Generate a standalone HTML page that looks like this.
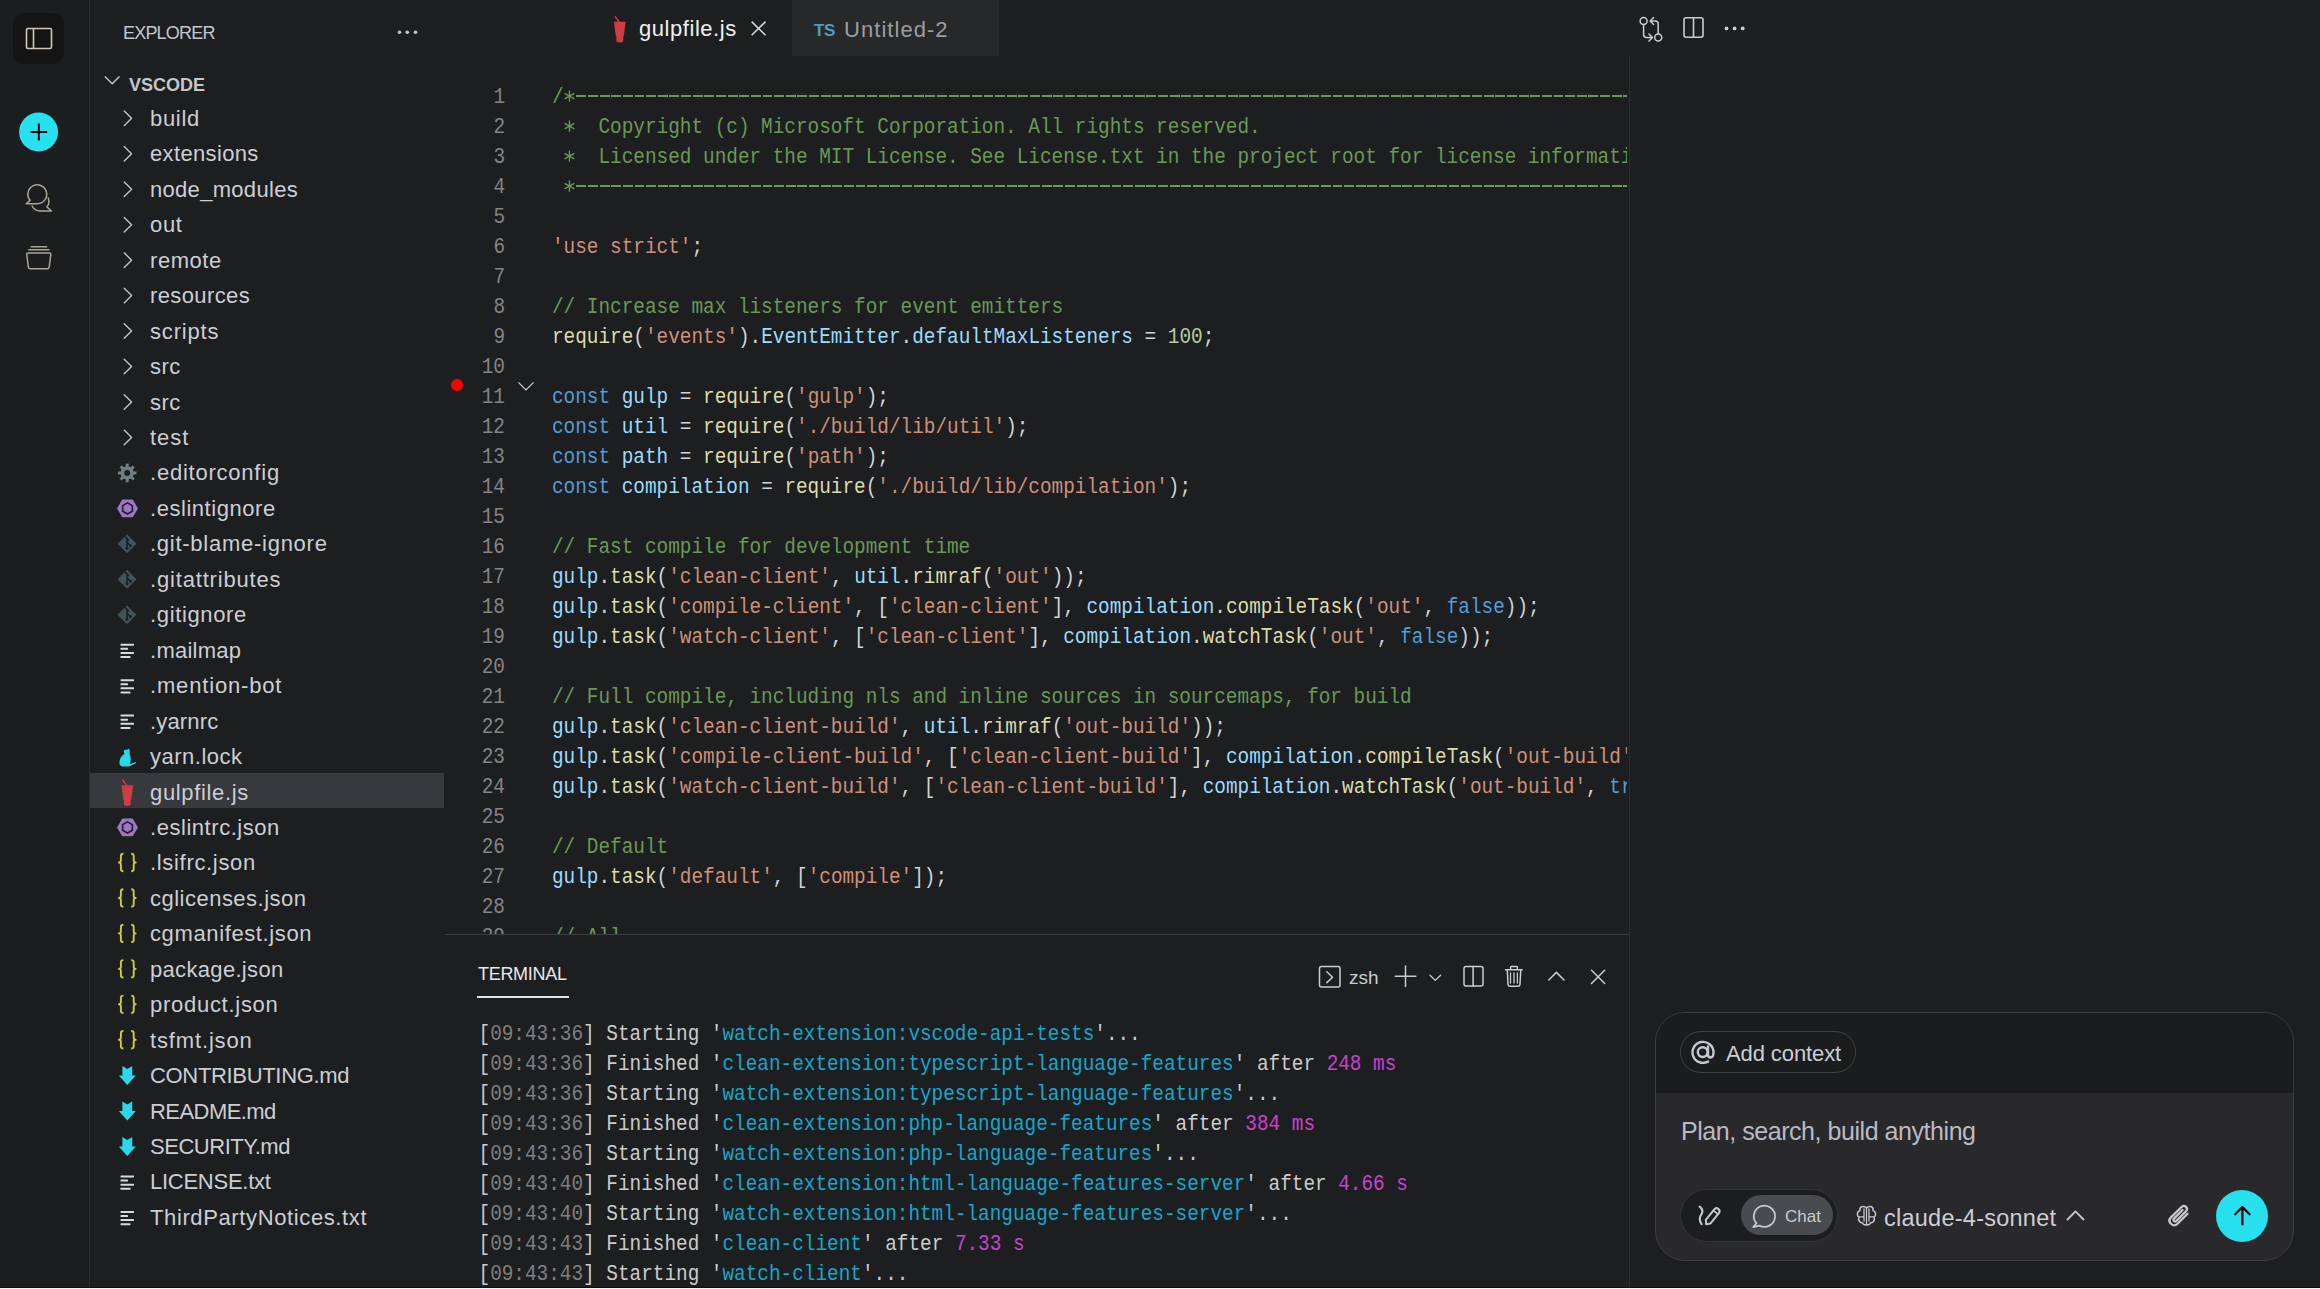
<!DOCTYPE html><html><head><meta charset="utf-8"><style>
*{margin:0;padding:0;box-sizing:border-box}
html,body{width:2320px;height:1289px;overflow:hidden;background:#1d1e20;font-family:"Liberation Sans",sans-serif}
.a{position:absolute}
#act{left:0;top:0;width:89px;height:1288px;background:#1c1d1f}
#actb{left:89px;top:0;width:1px;height:1288px;background:#2a2b2d}
#side{left:90px;top:0;width:355px;height:1288px;background:#1d1e20}
.row{position:absolute;left:0;width:354px;height:35.45px;}
.row .t{position:absolute;left:60px;top:1.5px;line-height:35.45px;font-size:22px;letter-spacing:0.25px;color:#ccced3;white-space:nowrap}
.row.sel{background:#37393d}
.code{position:absolute;left:445px;top:56px;width:1182px;height:878px;overflow:hidden}
.ln{position:absolute;left:0;width:60px;transform:scaleY(1.1);transform-origin:0 20.15px;text-align:right;font-family:"Liberation Mono",monospace;font-size:19.38px;line-height:30px;color:#858585;white-space:pre}
.cl{position:absolute;left:107px;transform:scaleY(1.1);transform-origin:0 20.15px;font-family:"Liberation Mono",monospace;font-size:19.38px;line-height:30px;color:#d4d4d4;white-space:pre}
.c{color:#6a9955}.s{color:#ce9178}.k{color:#569cd6}.v{color:#9cdcfe}.f{color:#dcdcaa}.n{color:#b5cea8}
.tl{position:absolute;left:478.5px;transform:scaleY(1.1);transform-origin:0 20.15px;font-family:"Liberation Mono",monospace;font-size:19.38px;line-height:30px;color:#cccccc;white-space:pre}
.g{color:#7f7f7f}.y{color:#11a8cd}.m{color:#c843cf}
</style></head><body><div class="a" id="act"></div><div class="a" id="actb"></div>
<div class="a" style="left:13px;top:13px;width:51px;height:51px;border-radius:12px;background:#141414"></div>
<svg class="a" style="left:0;top:0" width="89" height="300" viewBox="0 0 89 300"><rect x="26.5" y="28.5" width="25" height="20" rx="1.5" fill="none" stroke="#cfc8b8" stroke-width="1.6"/><line x1="33.5" y1="28.5" x2="33.5" y2="48.5" stroke="#cfc8b8" stroke-width="1.6"/><circle cx="38.6" cy="132" r="19.5" fill="#27e1ef"/><path d="M30.6 132H47.1M38.8 123.6V140.4" stroke="#000" stroke-width="2"/></svg>
<svg class="a" style="left:0px;top:170px" width="89" height="110" viewBox="0 170 89 110"><path d="M30.1 200.34 A9.4 9.4 0 1 1 37.3 203.7 H26.2 Z" fill="none" stroke="#aba597" stroke-width="1.5" stroke-linecap="round" stroke-linejoin="round"/><path d="M32.1 206 A9.3 9.3 0 0 0 40 211 H51.5 L46.9 206.9 A9.6 9.6 0 0 0 48.3 197.9" fill="none" stroke="#aba597" stroke-width="1.5" stroke-linecap="round" stroke-linejoin="round"/><path d="M31.2 246.8H46.6M28.8 249.8H48.9" fill="none" stroke="#aba597" stroke-width="1.5" stroke-linecap="round" stroke-linejoin="round"/><path d="M28.2 252.9H49.4Q51 252.9 50.8 254.5L49.2 267.2Q49 268.8 47.4 268.8H30.2Q28.6 268.8 28.4 267.2L26.8 254.5Q26.6 252.9 28.2 252.9Z" fill="none" stroke="#aba597" stroke-width="1.5" stroke-linecap="round" stroke-linejoin="round"/></svg>
<div class="a" id="side">
<div class="a" style="left:33px;top:19px;font-size:18px;color:#c4c6cb;letter-spacing:-0.8px;line-height:28px">EXPLORER</div>
<svg class="a" style="left:300px;top:22px" width="30" height="20"><circle cx="9.5" cy="10.3" r="1.8" fill="#c4c6cb"/><circle cx="17.3" cy="10.3" r="1.8" fill="#c4c6cb"/><circle cx="25.5" cy="10.3" r="1.8" fill="#c4c6cb"/></svg>
<div class="a" style="left:39px;top:69px;font-size:18px;font-weight:bold;color:#c4c6cb;line-height:32px">VSCODE</div>
<svg class="a" style="left:14px;top:74px" width="18" height="14"><path d="M0.9 2.6L8.2 9.8L15.5 2.6" fill="none" stroke="#c4c6cb" stroke-width="1.4"/></svg>
<div class="row" style="top:99.45px"><span class="t" style="letter-spacing:0.675px">build</span></div>
<div class="row" style="top:134.90px"><span class="t" style="letter-spacing:0.350px">extensions</span></div>
<div class="row" style="top:170.35px"><span class="t" style="letter-spacing:0.305px">node_modules</span></div>
<div class="row" style="top:205.80px"><span class="t" style="letter-spacing:0.700px">out</span></div>
<div class="row" style="top:241.25px"><span class="t" style="letter-spacing:0.550px">remote</span></div>
<div class="row" style="top:276.70px"><span class="t" style="letter-spacing:0.387px">resources</span></div>
<div class="row" style="top:312.15px"><span class="t" style="letter-spacing:0.833px">scripts</span></div>
<div class="row" style="top:347.60px"><span class="t" style="letter-spacing:0.500px">src</span></div>
<div class="row" style="top:383.05px"><span class="t" style="letter-spacing:0.500px">src</span></div>
<div class="row" style="top:418.50px"><span class="t" style="letter-spacing:0.983px">test</span></div>
<div class="row" style="top:453.95px"><span class="t" style="letter-spacing:0.775px">.editorconfig</span></div>
<div class="row" style="top:489.40px"><span class="t" style="letter-spacing:0.542px">.eslintignore</span></div>
<div class="row" style="top:524.85px"><span class="t" style="letter-spacing:0.738px">.git-blame-ignore</span></div>
<div class="row" style="top:560.30px"><span class="t" style="letter-spacing:0.827px">.gitattributes</span></div>
<div class="row" style="top:595.75px"><span class="t" style="letter-spacing:0.639px">.gitignore</span></div>
<div class="row" style="top:631.20px"><span class="t" style="letter-spacing:0.264px">.mailmap</span></div>
<div class="row" style="top:666.65px"><span class="t" style="letter-spacing:0.832px">.mention-bot</span></div>
<div class="row" style="top:702.10px"><span class="t" style="letter-spacing:0.167px">.yarnrc</span></div>
<div class="row" style="top:737.55px"><span class="t" style="letter-spacing:0.500px">yarn.lock</span></div>
<div class="row sel" style="top:773.00px"><span class="t" style="letter-spacing:0.650px">gulpfile.js</span></div>
<div class="row" style="top:808.45px"><span class="t" style="letter-spacing:0.542px">.eslintrc.json</span></div>
<div class="row" style="top:843.90px"><span class="t" style="letter-spacing:0.677px">.lsifrc.json</span></div>
<div class="row" style="top:879.35px"><span class="t" style="letter-spacing:0.486px">cglicenses.json</span></div>
<div class="row" style="top:914.80px"><span class="t" style="letter-spacing:0.621px">cgmanifest.json</span></div>
<div class="row" style="top:950.25px"><span class="t" style="letter-spacing:0.323px">package.json</span></div>
<div class="row" style="top:985.70px"><span class="t" style="letter-spacing:0.723px">product.json</span></div>
<div class="row" style="top:1021.15px"><span class="t" style="letter-spacing:0.850px">tsfmt.json</span></div>
<div class="row" style="top:1056.60px"><span class="t" style="letter-spacing:-0.329px">CONTRIBUTING.md</span></div>
<div class="row" style="top:1092.05px"><span class="t" style="letter-spacing:-0.562px">README.md</span></div>
<div class="row" style="top:1127.50px"><span class="t" style="letter-spacing:-0.470px">SECURITY.md</span></div>
<div class="row" style="top:1162.95px"><span class="t" style="letter-spacing:-0.260px">LICENSE.txt</span></div>
<div class="row" style="top:1198.40px"><span class="t" style="letter-spacing:0.620px">ThirdPartyNotices.txt</span></div>
</div>
<div class="a" style="left:792px;top:0;width:207px;height:56px;background:#27282a"></div>
<div class="a" style="left:639px;top:13px;font-size:22px;letter-spacing:0.55px;color:#f0f0f0;line-height:32px">gulpfile.js</div>
<svg class="a" style="left:750px;top:20px" width="17" height="17"><path d="M1.6 1.6L15.6 15.3M15.6 1.6L1.6 15.3" stroke="#d8d8d8" stroke-width="1.5"/></svg>
<div class="a" style="left:814px;top:20.5px;font-size:17px;font-weight:bold;letter-spacing:-0.5px;color:#519aba;line-height:20px">TS</div>
<div class="a" style="left:844px;top:14px;font-size:22px;letter-spacing:1.05px;color:#9d9d9d;line-height:32px">Untitled-2</div>
<div class="a" style="left:1629px;top:56px;width:1px;height:1232px;background:#2c2d30"></div>
<div class="code">
<div class="ln" style="top:27.2px">1</div>
<div class="cl" style="top:27.2px"><span class="c">/</span></div>
<div class="ln" style="top:57.2px">2</div>
<div class="cl" style="top:57.2px"><span class="c">    Copyright (c) Microsoft Corporation. All rights reserved.</span></div>
<div class="ln" style="top:87.2px">3</div>
<div class="cl" style="top:87.2px"><span class="c">    Licensed under the MIT License. See License.txt in the project root for license information.</span></div>
<div class="ln" style="top:117.2px">4</div>
<div class="cl" style="top:117.2px"></div>
<div class="ln" style="top:147.2px">5</div>
<div class="cl" style="top:147.2px"></div>
<div class="ln" style="top:177.2px">6</div>
<div class="cl" style="top:177.2px"><span class="s">&#x27;use strict&#x27;</span>;</div>
<div class="ln" style="top:207.2px">7</div>
<div class="cl" style="top:207.2px"></div>
<div class="ln" style="top:237.2px">8</div>
<div class="cl" style="top:237.2px"><span class="c">// Increase max listeners for event emitters</span></div>
<div class="ln" style="top:267.2px">9</div>
<div class="cl" style="top:267.2px"><span class="f">require</span>(<span class="s">&#x27;events&#x27;</span>).<span class="v">EventEmitter</span>.<span class="v">defaultMaxListeners</span> = <span class="n">100</span>;</div>
<div class="ln" style="top:297.2px">10</div>
<div class="cl" style="top:297.2px"></div>
<div class="ln" style="top:327.2px">11</div>
<div class="cl" style="top:327.2px"><span class="k">const</span> <span class="v">gulp</span> = <span class="f">require</span>(<span class="s">&#x27;gulp&#x27;</span>);</div>
<div class="ln" style="top:357.2px">12</div>
<div class="cl" style="top:357.2px"><span class="k">const</span> <span class="v">util</span> = <span class="f">require</span>(<span class="s">&#x27;./build/lib/util&#x27;</span>);</div>
<div class="ln" style="top:387.2px">13</div>
<div class="cl" style="top:387.2px"><span class="k">const</span> <span class="v">path</span> = <span class="f">require</span>(<span class="s">&#x27;path&#x27;</span>);</div>
<div class="ln" style="top:417.2px">14</div>
<div class="cl" style="top:417.2px"><span class="k">const</span> <span class="v">compilation</span> = <span class="f">require</span>(<span class="s">&#x27;./build/lib/compilation&#x27;</span>);</div>
<div class="ln" style="top:447.2px">15</div>
<div class="cl" style="top:447.2px"></div>
<div class="ln" style="top:477.2px">16</div>
<div class="cl" style="top:477.2px"><span class="c">// Fast compile for development time</span></div>
<div class="ln" style="top:507.2px">17</div>
<div class="cl" style="top:507.2px"><span class="v">gulp</span>.<span class="f">task</span>(<span class="s">&#x27;clean-client&#x27;</span>, <span class="v">util</span>.<span class="f">rimraf</span>(<span class="s">&#x27;out&#x27;</span>));</div>
<div class="ln" style="top:537.2px">18</div>
<div class="cl" style="top:537.2px"><span class="v">gulp</span>.<span class="f">task</span>(<span class="s">&#x27;compile-client&#x27;</span>, [<span class="s">&#x27;clean-client&#x27;</span>], <span class="v">compilation</span>.<span class="f">compileTask</span>(<span class="s">&#x27;out&#x27;</span>, <span class="k">false</span>));</div>
<div class="ln" style="top:567.2px">19</div>
<div class="cl" style="top:567.2px"><span class="v">gulp</span>.<span class="f">task</span>(<span class="s">&#x27;watch-client&#x27;</span>, [<span class="s">&#x27;clean-client&#x27;</span>], <span class="v">compilation</span>.<span class="f">watchTask</span>(<span class="s">&#x27;out&#x27;</span>, <span class="k">false</span>));</div>
<div class="ln" style="top:597.2px">20</div>
<div class="cl" style="top:597.2px"></div>
<div class="ln" style="top:627.2px">21</div>
<div class="cl" style="top:627.2px"><span class="c">// Full compile, including nls and inline sources in sourcemaps, for build</span></div>
<div class="ln" style="top:657.2px">22</div>
<div class="cl" style="top:657.2px"><span class="v">gulp</span>.<span class="f">task</span>(<span class="s">&#x27;clean-client-build&#x27;</span>, <span class="v">util</span>.<span class="f">rimraf</span>(<span class="s">&#x27;out-build&#x27;</span>));</div>
<div class="ln" style="top:687.2px">23</div>
<div class="cl" style="top:687.2px"><span class="v">gulp</span>.<span class="f">task</span>(<span class="s">&#x27;compile-client-build&#x27;</span>, [<span class="s">&#x27;clean-client-build&#x27;</span>], <span class="v">compilation</span>.<span class="f">compileTask</span>(<span class="s">&#x27;out-build&#x27;</span>, <span class="k">true</span>));</div>
<div class="ln" style="top:717.2px">24</div>
<div class="cl" style="top:717.2px"><span class="v">gulp</span>.<span class="f">task</span>(<span class="s">&#x27;watch-client-build&#x27;</span>, [<span class="s">&#x27;clean-client-build&#x27;</span>], <span class="v">compilation</span>.<span class="f">watchTask</span>(<span class="s">&#x27;out-build&#x27;</span>, <span class="k">true</span>));</div>
<div class="ln" style="top:747.2px">25</div>
<div class="cl" style="top:747.2px"></div>
<div class="ln" style="top:777.2px">26</div>
<div class="cl" style="top:777.2px"><span class="c">// Default</span></div>
<div class="ln" style="top:807.2px">27</div>
<div class="cl" style="top:807.2px"><span class="v">gulp</span>.<span class="f">task</span>(<span class="s">&#x27;default&#x27;</span>, [<span class="s">&#x27;compile&#x27;</span>]);</div>
<div class="ln" style="top:837.2px">28</div>
<div class="cl" style="top:837.2px"></div>
<div class="ln" style="top:867.2px">29</div>
<div class="cl" style="top:867.2px"><span class="c">// All</span></div>
</div>
<div class="a" style="left:575.27px;top:95.0px;width:1051.73px;height:2px;background:repeating-linear-gradient(90deg,transparent 0 1.4px,#6a9955 1.4px 11.3px,transparent 11.3px 11.633px)"></div>
<div class="a" style="left:575.27px;top:185.0px;width:1051.73px;height:2px;background:repeating-linear-gradient(90deg,transparent 0 1.4px,#6a9955 1.4px 11.3px,transparent 11.3px 11.633px)"></div>
<svg class="a" style="left:555px;top:75px" width="30" height="130" viewBox="555 75 30 130"><path d="M569.45 90.50L569.45 101.70" stroke="#6a9955" stroke-width="1.35"/><path d="M564.60 93.30L574.30 98.90" stroke="#6a9955" stroke-width="1.35"/><path d="M574.30 93.30L564.60 98.90" stroke="#6a9955" stroke-width="1.35"/><path d="M569.45 120.50L569.45 131.70" stroke="#6a9955" stroke-width="1.35"/><path d="M564.60 123.30L574.30 128.90" stroke="#6a9955" stroke-width="1.35"/><path d="M574.30 123.30L564.60 128.90" stroke="#6a9955" stroke-width="1.35"/><path d="M569.45 150.50L569.45 161.70" stroke="#6a9955" stroke-width="1.35"/><path d="M564.60 153.30L574.30 158.90" stroke="#6a9955" stroke-width="1.35"/><path d="M574.30 153.30L564.60 158.90" stroke="#6a9955" stroke-width="1.35"/><path d="M569.45 180.50L569.45 191.70" stroke="#6a9955" stroke-width="1.35"/><path d="M564.60 183.30L574.30 188.90" stroke="#6a9955" stroke-width="1.35"/><path d="M574.30 183.30L564.60 188.90" stroke="#6a9955" stroke-width="1.35"/></svg>
<div class="a" style="left:450.9px;top:378.8px;width:11.8px;height:11.8px;border-radius:50%;background:#ff0000"></div>
<svg class="a" style="left:516px;top:380.5px" width="20" height="12"><path d="M2.4 1.4L10 8.9L17.6 1.4" fill="none" stroke="#cccccc" stroke-width="1.3"/></svg>
<div class="a" style="left:445px;top:934px;width:1184px;height:1px;background:#3c3d40"></div>
<div class="a" style="left:478px;top:961px;font-size:18px;letter-spacing:-0.3px;color:#e8e8e8;line-height:26px">TERMINAL</div>
<div class="a" style="left:477px;top:996px;width:92px;height:2px;background:#e0e0e0"></div>
<div class="tl" style="top:1020px">[<span class="g">09:43:36</span>] Starting '<span class="y">watch-extension:vscode-api-tests</span>'...</div>
<div class="tl" style="top:1050px">[<span class="g">09:43:36</span>] Finished '<span class="y">clean-extension:typescript-language-features</span>' after <span class="m">248 ms</span></div>
<div class="tl" style="top:1080px">[<span class="g">09:43:36</span>] Starting '<span class="y">watch-extension:typescript-language-features</span>'...</div>
<div class="tl" style="top:1110px">[<span class="g">09:43:36</span>] Finished '<span class="y">clean-extension:php-language-features</span>' after <span class="m">384 ms</span></div>
<div class="tl" style="top:1140px">[<span class="g">09:43:36</span>] Starting '<span class="y">watch-extension:php-language-features</span>'...</div>
<div class="tl" style="top:1170px">[<span class="g">09:43:40</span>] Finished '<span class="y">clean-extension:html-language-features-server</span>' after <span class="m">4.66 s</span></div>
<div class="tl" style="top:1200px">[<span class="g">09:43:40</span>] Starting '<span class="y">watch-extension:html-language-features-server</span>'...</div>
<div class="tl" style="top:1230px">[<span class="g">09:43:43</span>] Finished '<span class="y">clean-client</span>' after <span class="m">7.33 s</span></div>
<div class="tl" style="top:1260px">[<span class="g">09:43:43</span>] Starting '<span class="y">watch-client</span>'...</div>
<div class="a" style="left:1655px;top:1012px;width:639px;height:249px;border-radius:30px;border:1.5px solid #3c3d40;background:#29292c;overflow:hidden"><div class="a" style="left:0;top:0;width:100%;height:80px;background:#1b1c1e"></div></div>
<div class="a" style="left:1680px;top:1031px;width:176px;height:42px;border-radius:21px;border:1.8px solid #404144"></div>
<div class="a" style="left:1726px;top:1038.5px;font-size:22px;letter-spacing:-0.1px;color:#ccced3;line-height:30px">Add context</div>
<div class="a" style="left:1681px;top:1115px;font-size:25px;letter-spacing:-0.45px;color:#b9bbc1;line-height:32px">Plan, search, build anything</div>
<div class="a" style="left:1680px;top:1189px;width:158px;height:53px;border-radius:27px;border:1.5px solid #333437;background:#1c1d1f"></div>
<div class="a" style="left:1741px;top:1195px;width:92px;height:40px;border-radius:20px;background:#4a4b4e"></div>
<div class="a" style="left:1785px;top:1204.5px;font-size:17px;color:#c8cacf;line-height:24px">Chat</div>
<div class="a" style="left:1884px;top:1202px;font-size:23.5px;letter-spacing:0.25px;color:#ccced3;line-height:32px">claude-4-sonnet</div>
<div class="a" style="left:2216px;top:1190px;width:52px;height:52px;border-radius:50%;background:#27e1ef"></div>
<svg class="a" style="left:90px;top:60px" width="355" height="1200" viewBox="90 60 355 1200"><path d="M124.2 111.05L131.6 118.35L124.2 125.65" fill="none" stroke="#c4c6cb" stroke-width="1.35" stroke-linecap="round" stroke-linejoin="round"/><path d="M124.2 146.50L131.6 153.80L124.2 161.10" fill="none" stroke="#c4c6cb" stroke-width="1.35" stroke-linecap="round" stroke-linejoin="round"/><path d="M124.2 181.95L131.6 189.25L124.2 196.55" fill="none" stroke="#c4c6cb" stroke-width="1.35" stroke-linecap="round" stroke-linejoin="round"/><path d="M124.2 217.40L131.6 224.70L124.2 232.00" fill="none" stroke="#c4c6cb" stroke-width="1.35" stroke-linecap="round" stroke-linejoin="round"/><path d="M124.2 252.85L131.6 260.15L124.2 267.45" fill="none" stroke="#c4c6cb" stroke-width="1.35" stroke-linecap="round" stroke-linejoin="round"/><path d="M124.2 288.30L131.6 295.60L124.2 302.90" fill="none" stroke="#c4c6cb" stroke-width="1.35" stroke-linecap="round" stroke-linejoin="round"/><path d="M124.2 323.75L131.6 331.05L124.2 338.35" fill="none" stroke="#c4c6cb" stroke-width="1.35" stroke-linecap="round" stroke-linejoin="round"/><path d="M124.2 359.20L131.6 366.50L124.2 373.80" fill="none" stroke="#c4c6cb" stroke-width="1.35" stroke-linecap="round" stroke-linejoin="round"/><path d="M124.2 394.65L131.6 401.95L124.2 409.25" fill="none" stroke="#c4c6cb" stroke-width="1.35" stroke-linecap="round" stroke-linejoin="round"/><path d="M124.2 430.10L131.6 437.40L124.2 444.70" fill="none" stroke="#c4c6cb" stroke-width="1.35" stroke-linecap="round" stroke-linejoin="round"/><circle cx="127.2" cy="472.95" r="6.6" fill="#6d8086"/><rect x="125.7" y="463.65" width="3" height="4" fill="#6d8086" transform="rotate(0 127.2 472.95)"/><rect x="125.7" y="463.65" width="3" height="4" fill="#6d8086" transform="rotate(45 127.2 472.95)"/><rect x="125.7" y="463.65" width="3" height="4" fill="#6d8086" transform="rotate(90 127.2 472.95)"/><rect x="125.7" y="463.65" width="3" height="4" fill="#6d8086" transform="rotate(135 127.2 472.95)"/><rect x="125.7" y="463.65" width="3" height="4" fill="#6d8086" transform="rotate(180 127.2 472.95)"/><rect x="125.7" y="463.65" width="3" height="4" fill="#6d8086" transform="rotate(225 127.2 472.95)"/><rect x="125.7" y="463.65" width="3" height="4" fill="#6d8086" transform="rotate(270 127.2 472.95)"/><rect x="125.7" y="463.65" width="3" height="4" fill="#6d8086" transform="rotate(315 127.2 472.95)"/><circle cx="127.2" cy="472.95" r="3" fill="#1d1e20"/><polygon points="138.00,508.40 132.75,517.23 122.25,517.23 117.00,508.40 122.25,499.57 132.75,499.57" fill="#a074c4"/><polygon points="132.35,511.20 127.50,514.00 122.65,511.20 122.65,505.60 127.50,502.80 132.35,505.60" fill="#a074c4" stroke="#1d1e20" stroke-width="1.6"/><path d="M127 534.35L136.5 543.85L127 553.35L117.5 543.85Z" fill="#41535b"/><path d="M124.5 536.05L129 540.55M127 538.55V548.85M127 542.35L130.5 545.85" stroke="#1d1e20" stroke-width="1.5" fill="none"/><circle cx="127" cy="548.35" r="1.5" fill="#1d1e20"/><circle cx="130.5" cy="545.85" r="1.4" fill="#1d1e20"/><path d="M127 569.80L136.5 579.30L127 588.80L117.5 579.30Z" fill="#41535b"/><path d="M124.5 571.50L129 576.00M127 574.00V584.30M127 577.80L130.5 581.30" stroke="#1d1e20" stroke-width="1.5" fill="none"/><circle cx="127" cy="583.80" r="1.5" fill="#1d1e20"/><circle cx="130.5" cy="581.30" r="1.4" fill="#1d1e20"/><path d="M127 605.25L136.5 614.75L127 624.25L117.5 614.75Z" fill="#41535b"/><path d="M124.5 606.95L129 611.45M127 609.45V619.75M127 613.25L130.5 616.75" stroke="#1d1e20" stroke-width="1.5" fill="none"/><circle cx="127" cy="619.25" r="1.5" fill="#1d1e20"/><circle cx="130.5" cy="616.75" r="1.4" fill="#1d1e20"/><rect x="120.5" y="643.70" width="13.5" height="2" rx="0.6" fill="#d7dadc"/><rect x="120.5" y="647.80" width="7.5" height="2" rx="0.6" fill="#d7dadc"/><rect x="120.5" y="651.90" width="13.5" height="2" rx="0.6" fill="#d7dadc"/><rect x="120.5" y="656.00" width="10.0" height="2" rx="0.6" fill="#d7dadc"/><rect x="120.5" y="679.15" width="13.5" height="2" rx="0.6" fill="#d7dadc"/><rect x="120.5" y="683.25" width="7.5" height="2" rx="0.6" fill="#d7dadc"/><rect x="120.5" y="687.35" width="13.5" height="2" rx="0.6" fill="#d7dadc"/><rect x="120.5" y="691.45" width="10.0" height="2" rx="0.6" fill="#d7dadc"/><rect x="120.5" y="714.60" width="13.5" height="2" rx="0.6" fill="#d7dadc"/><rect x="120.5" y="718.70" width="7.5" height="2" rx="0.6" fill="#d7dadc"/><rect x="120.5" y="722.80" width="13.5" height="2" rx="0.6" fill="#d7dadc"/><rect x="120.5" y="726.90" width="10.0" height="2" rx="0.6" fill="#d7dadc"/><path d="M125 749.75C123 750.75 124 752.75 124.5 753.75C121 755.75 119 759.75 119.5 763.75C120 766.25 122 766.55 124 766.55L129 766.55L136 763.25L135.5 762.05L130 764.25C131 760.75 131 756.75 129.5 753.75C130 751.75 130 749.75 128.5 748.45L127.5 749.75Z" fill="#2bd8eb"/><path d="M122.60 780.00 L126.50 785.10" stroke="#cc3e44" stroke-width="1.40" stroke-linecap="round" fill="none"/><path d="M121.40 785.20 L133.20 785.20 L131.20 799.80 L130.70 799.80 L130.70 804.20 Q130.70 805.90 127.30 805.90 Q123.90 805.90 123.90 804.20 L123.90 799.80 L123.40 799.80 Z" fill="#cc3e44"/><polygon points="138.00,827.45 132.75,836.28 122.25,836.28 117.00,827.45 122.25,818.62 132.75,818.62" fill="#a074c4"/><polygon points="132.35,830.25 127.50,833.05 122.65,830.25 122.65,824.65 127.50,821.85 132.35,824.65" fill="#a074c4" stroke="#1d1e20" stroke-width="1.6"/><path d="M123.4 853.80Q120.9 853.80 120.9 856.00V860.30Q120.9 862.50 118.9 862.50Q120.9 862.50 120.9 864.70V869.00Q120.9 871.20 123.4 871.20 M131.2 853.80Q133.7 853.80 133.7 856.00V860.30Q133.7 862.50 135.7 862.50Q133.7 862.50 133.7 864.70V869.00Q133.7 871.20 131.2 871.20" fill="none" stroke="#cbcb41" stroke-width="1.9" stroke-linejoin="round"/><path d="M123.4 889.25Q120.9 889.25 120.9 891.45V895.75Q120.9 897.95 118.9 897.95Q120.9 897.95 120.9 900.15V904.45Q120.9 906.65 123.4 906.65 M131.2 889.25Q133.7 889.25 133.7 891.45V895.75Q133.7 897.95 135.7 897.95Q133.7 897.95 133.7 900.15V904.45Q133.7 906.65 131.2 906.65" fill="none" stroke="#cbcb41" stroke-width="1.9" stroke-linejoin="round"/><path d="M123.4 924.70Q120.9 924.70 120.9 926.90V931.20Q120.9 933.40 118.9 933.40Q120.9 933.40 120.9 935.60V939.90Q120.9 942.10 123.4 942.10 M131.2 924.70Q133.7 924.70 133.7 926.90V931.20Q133.7 933.40 135.7 933.40Q133.7 933.40 133.7 935.60V939.90Q133.7 942.10 131.2 942.10" fill="none" stroke="#cbcb41" stroke-width="1.9" stroke-linejoin="round"/><path d="M123.4 960.15Q120.9 960.15 120.9 962.35V966.65Q120.9 968.85 118.9 968.85Q120.9 968.85 120.9 971.05V975.35Q120.9 977.55 123.4 977.55 M131.2 960.15Q133.7 960.15 133.7 962.35V966.65Q133.7 968.85 135.7 968.85Q133.7 968.85 133.7 971.05V975.35Q133.7 977.55 131.2 977.55" fill="none" stroke="#cbcb41" stroke-width="1.9" stroke-linejoin="round"/><path d="M123.4 995.60Q120.9 995.60 120.9 997.80V1002.10Q120.9 1004.30 118.9 1004.30Q120.9 1004.30 120.9 1006.50V1010.80Q120.9 1013.00 123.4 1013.00 M131.2 995.60Q133.7 995.60 133.7 997.80V1002.10Q133.7 1004.30 135.7 1004.30Q133.7 1004.30 133.7 1006.50V1010.80Q133.7 1013.00 131.2 1013.00" fill="none" stroke="#cbcb41" stroke-width="1.9" stroke-linejoin="round"/><path d="M123.4 1031.05Q120.9 1031.05 120.9 1033.25V1037.55Q120.9 1039.75 118.9 1039.75Q120.9 1039.75 120.9 1041.95V1046.25Q120.9 1048.45 123.4 1048.45 M131.2 1031.05Q133.7 1031.05 133.7 1033.25V1037.55Q133.7 1039.75 135.7 1039.75Q133.7 1039.75 133.7 1041.95V1046.25Q133.7 1048.45 131.2 1048.45" fill="none" stroke="#cbcb41" stroke-width="1.9" stroke-linejoin="round"/><path d="M122.4 1066.10L127.3 1069.10L132.2 1066.10V1075.60H135.8L127.3 1085.10L118.8 1075.60H122.4Z" fill="#2bd8eb"/><path d="M122.4 1101.55L127.3 1104.55L132.2 1101.55V1111.05H135.8L127.3 1120.55L118.8 1111.05H122.4Z" fill="#2bd8eb"/><path d="M122.4 1137.00L127.3 1140.00L132.2 1137.00V1146.50H135.8L127.3 1156.00L118.8 1146.50H122.4Z" fill="#2bd8eb"/><rect x="120.5" y="1175.45" width="13.5" height="2" rx="0.6" fill="#d7dadc"/><rect x="120.5" y="1179.55" width="7.5" height="2" rx="0.6" fill="#d7dadc"/><rect x="120.5" y="1183.65" width="13.5" height="2" rx="0.6" fill="#d7dadc"/><rect x="120.5" y="1187.75" width="10.0" height="2" rx="0.6" fill="#d7dadc"/><rect x="120.5" y="1210.90" width="13.5" height="2" rx="0.6" fill="#d7dadc"/><rect x="120.5" y="1215.00" width="7.5" height="2" rx="0.6" fill="#d7dadc"/><rect x="120.5" y="1219.10" width="13.5" height="2" rx="0.6" fill="#d7dadc"/><rect x="120.5" y="1223.20" width="10.0" height="2" rx="0.6" fill="#d7dadc"/></svg>
<svg class="a" style="left:600px;top:0px" width="40" height="56" viewBox="600 0 40 56"><path d="M615.10 16.60 L619.00 21.70" stroke="#cc3e44" stroke-width="1.40" stroke-linecap="round" fill="none"/><path d="M613.90 21.80 L625.70 21.80 L623.70 36.40 L623.20 36.40 L623.20 40.80 Q623.20 42.50 619.80 42.50 Q616.40 42.50 616.40 40.80 L616.40 36.40 L615.90 36.40 Z" fill="#cc3e44"/></svg>
<svg class="a" style="left:1630px;top:5px" width="130" height="45" viewBox="1630 5 130 45"><circle cx="1643.6" cy="21" r="3.5" fill="none" stroke="#cccccc" stroke-width="1.5" stroke-linecap="round" stroke-linejoin="round"/><circle cx="1658.2" cy="37.4" r="3.5" fill="none" stroke="#cccccc" stroke-width="1.5" stroke-linecap="round" stroke-linejoin="round"/><path d="M1643.6 24.5V34.5Q1643.6 37.5 1646.6 37.5H1652.3M1649 34L1652.5 37.5L1649 41" fill="none" stroke="#cccccc" stroke-width="1.5" stroke-linecap="round" stroke-linejoin="round"/><path d="M1658.2 33.9V24Q1658.2 21 1655.2 21H1650.3M1653.6 17.5L1650.1 21L1653.6 24.5" fill="none" stroke="#cccccc" stroke-width="1.5" stroke-linecap="round" stroke-linejoin="round"/><rect x="1684" y="17.8" width="19" height="19.5" rx="2.2" fill="none" stroke="#cccccc" stroke-width="1.6" stroke-linecap="round" stroke-linejoin="round"/><path d="M1693.5 17.8V37.3" fill="none" stroke="#cccccc" stroke-width="1.6" stroke-linecap="round" stroke-linejoin="round"/><circle cx="1726.5" cy="28.4" r="1.9" fill="#cccccc"/><circle cx="1734.6" cy="28.4" r="1.9" fill="#cccccc"/><circle cx="1742.7" cy="28.4" r="1.9" fill="#cccccc"/></svg>
<svg class="a" style="left:1310px;top:955px" width="310" height="40" viewBox="1310 955 310 40"><rect x="1319.5" y="966.5" width="20.5" height="20.5" rx="2" fill="none" stroke="#cccccc" stroke-width="1.5" stroke-linecap="round" stroke-linejoin="round"/><path d="M1326.8 971.8L1332.5 977.2L1326.8 982.6" fill="none" stroke="#cccccc" stroke-width="1.5" stroke-linecap="round" stroke-linejoin="round"/><path d="M1395.2 976.3H1415.8M1405.5 966V986.6" fill="none" stroke="#cccccc" stroke-width="1.5" stroke-linecap="round" stroke-linejoin="round"/><path d="M1430 975.2L1435.3 980.4L1440.6 975.2" fill="none" stroke="#cccccc" stroke-width="1.3" stroke-linecap="round" stroke-linejoin="round"/><rect x="1464" y="966.4" width="19" height="19.6" rx="2" fill="none" stroke="#cccccc" stroke-width="1.5" stroke-linecap="round" stroke-linejoin="round"/><path d="M1473.1 966.4V986" fill="none" stroke="#cccccc" stroke-width="1.5" stroke-linecap="round" stroke-linejoin="round"/><path d="M1505.5 969.8H1522.2M1510.6 969.5V967.2Q1510.6 966.4 1511.4 966.4H1516.6Q1517.4 966.4 1517.4 967.2V969.5" fill="none" stroke="#cccccc" stroke-width="1.5" stroke-linecap="round" stroke-linejoin="round"/><path d="M1507.3 970.5L1508 984.3Q1508.2 986.2 1510 986.2H1518Q1519.8 986.2 1520 984.3L1520.7 970.5" fill="none" stroke="#cccccc" stroke-width="1.5" stroke-linecap="round" stroke-linejoin="round"/><path d="M1510.5 972.8V983M1514 972.8V983M1517.4 972.8V983" fill="none" stroke="#cccccc" stroke-width="1.3" stroke-linecap="round" stroke-linejoin="round"/><path d="M1548.8 980L1556.4 972.4L1564 980" fill="none" stroke="#cccccc" stroke-width="1.5" stroke-linecap="round" stroke-linejoin="round"/><path d="M1591.5 970.3L1604.7 983.5M1604.7 970.3L1591.5 983.5" fill="none" stroke="#cccccc" stroke-width="1.5" stroke-linecap="round" stroke-linejoin="round"/></svg>
<div class="a" style="left:1349px;top:965px;font-size:19px;color:#cccccc;line-height:26px">zsh</div>
<svg class="a" style="left:1680px;top:1030px" width="620" height="215" viewBox="1680 1030 620 215"><path d="M1708 1046.5V1054.5Q1708 1057.5 1710.5 1057.5Q1713.5 1057.5 1713.5 1052.2A10.5 10.5 0 1 0 1708 1061.6" fill="none" stroke="#c6c8ce" stroke-width="2.4" stroke-linecap="round" stroke-linejoin="round"/><circle cx="1702.7" cy="1052.1" r="4.9" fill="none" stroke="#c6c8ce" stroke-width="2.4" stroke-linecap="round" stroke-linejoin="round"/><path d="M1699.6 1206.6Q1703.6 1209.6 1701.9 1213.4Q1697.8 1219.2 1701.6 1224.1" fill="none" stroke="#c6c8ce" stroke-width="2.1" stroke-linecap="round" stroke-linejoin="round"/><g transform="translate(1712.4 1216.4) rotate(-51)"><path d="M-10 0L-6.8 -2.9H6.6Q9.6 -2.9 9.6 0Q9.6 2.9 6.6 2.9H-6.8Z" fill="none" stroke="#c6c8ce" stroke-width="2.0" stroke-linecap="round" stroke-linejoin="round"/><path d="M5.2 -2.9V2.9" fill="none" stroke="#c6c8ce" stroke-width="1.6" stroke-linecap="round" stroke-linejoin="round"/></g><path d="M1756.4 1223.2A10.6 10.6 0 1 1 1759.4 1225.6L1753.3 1227.1Z" fill="none" stroke="#c6c8ce" stroke-width="1.8" stroke-linecap="round" stroke-linejoin="round"/><path d="M1866.5 1208Q1864.5 1205.6 1861.6 1206.8Q1859.5 1207.8 1860 1210.6Q1857 1211.5 1857.5 1214.8Q1857.8 1216.5 1859 1217.2Q1858 1219.5 1859.5 1221.5Q1861 1223 1862.5 1222.8Q1863.6 1225.6 1866.5 1224.6Q1869.4 1225.6 1870.5 1222.8Q1872 1223 1873.5 1221.5Q1875 1219.5 1874 1217.2Q1875.2 1216.5 1875.5 1214.8Q1876 1211.5 1873 1210.6Q1873.5 1207.8 1871.4 1206.8Q1868.5 1205.6 1866.5 1208Z" fill="none" stroke="#c6c8ce" stroke-width="1.5" stroke-linecap="round" stroke-linejoin="round"/><path d="M1866.5 1208V1224.5M1864 1221V1209M1869 1209V1221M1859.5 1216.8H1863.3M1869.7 1216.8H1873.5" fill="none" stroke="#c6c8ce" stroke-width="1.3" stroke-linecap="round" stroke-linejoin="round"/><path d="M2067.5 1219.5L2075.5 1211.3L2083.5 1219.5" fill="none" stroke="#c6c8ce" stroke-width="1.8" stroke-linecap="round" stroke-linejoin="round"/><path d="M2187.6 1213.8L2177.5 1223.8Q2174.2 1227 2171 1223.8Q2167.8 1220.6 2171 1217.4L2181.5 1207Q2183.8 1204.7 2186 1206.9Q2188.2 1209.1 2185.9 1211.4L2176.4 1220.9Q2175.2 1222 2174 1220.9Q2172.9 1219.7 2174 1218.6L2182.5 1210" fill="none" stroke="#c6c8ce" stroke-width="2.3" stroke-linecap="round" stroke-linejoin="round"/><path d="M2242.4 1224.5V1207.3M2235.2 1214.3L2242.4 1207L2249.6 1214.3" fill="none" stroke="#000000" stroke-width="2.2" stroke-linecap="round" stroke-linejoin="round"/></svg>
<div class="a" style="left:0;top:1287px;width:2320px;height:1px;background:#0e0f10"></div>
<div class="a" style="left:0;top:1288px;width:2320px;height:1px;background:#f4f4f4"></div></body></html>
